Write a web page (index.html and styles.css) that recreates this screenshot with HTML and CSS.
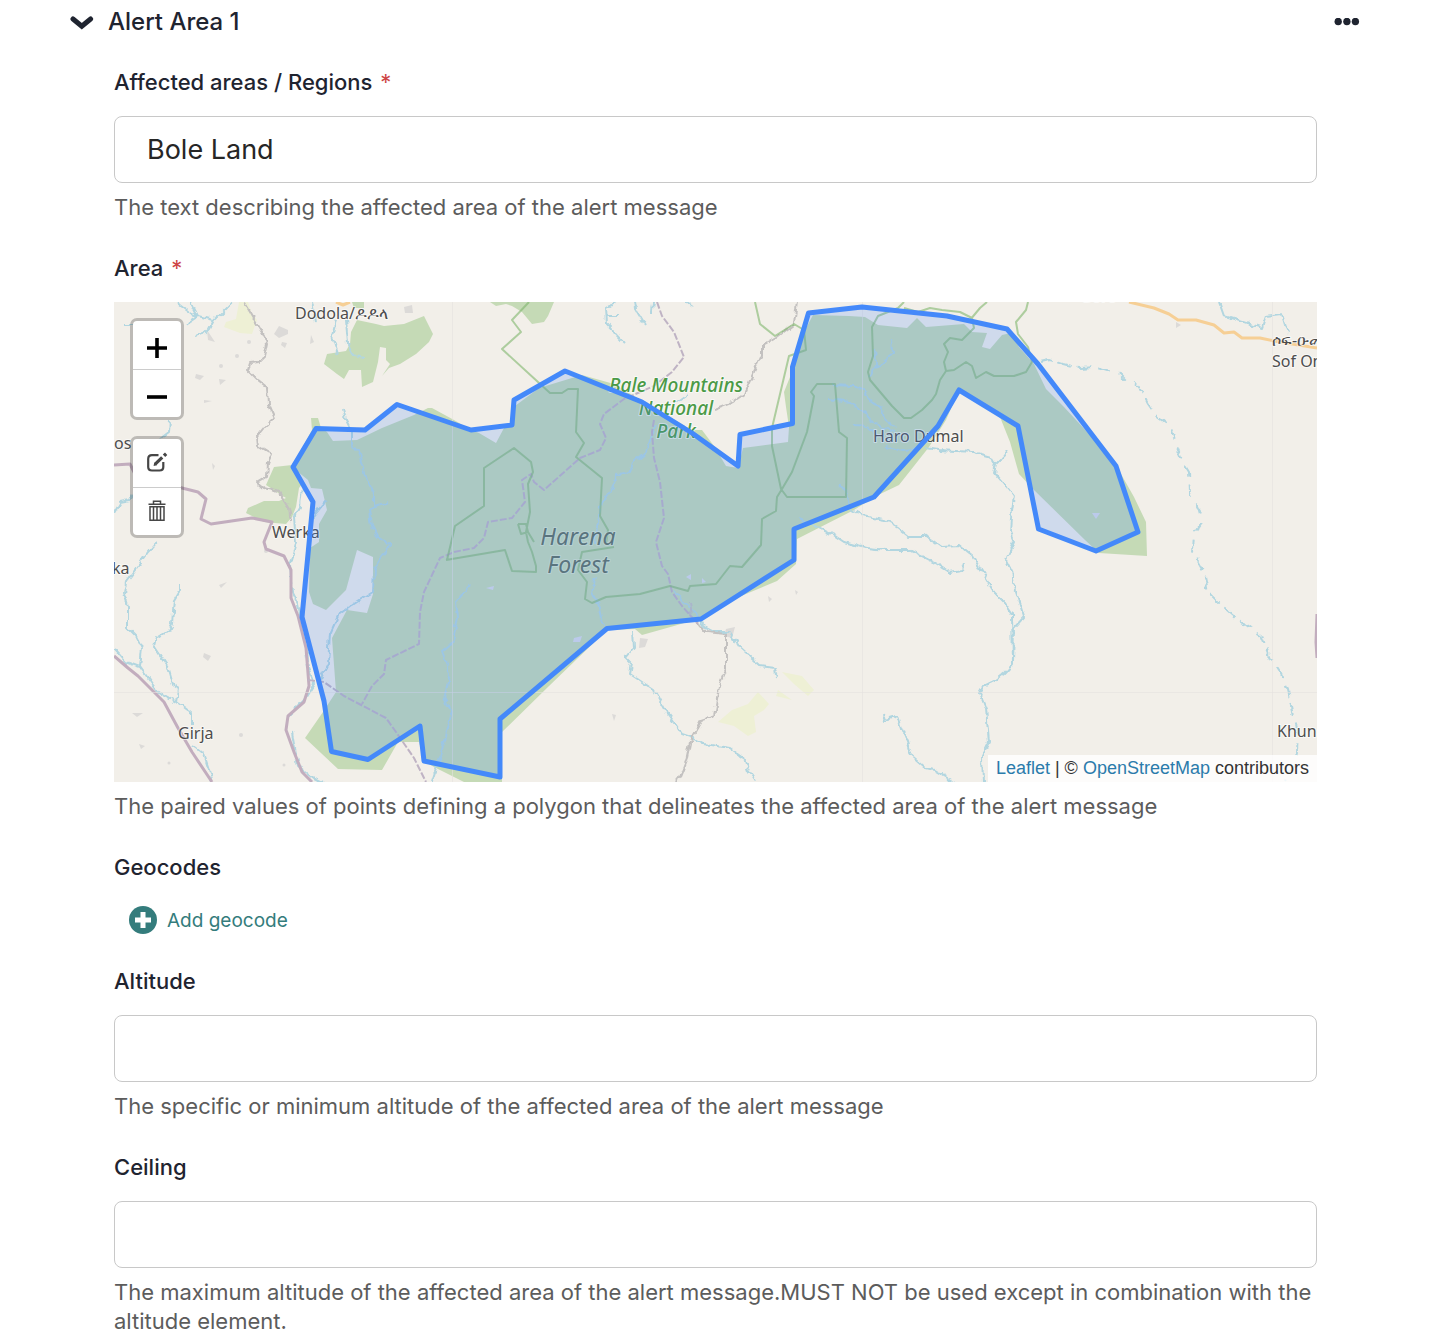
FILE: index.html
```html
<!DOCTYPE html>
<html lang="en">
<head>
<meta charset="utf-8">
<meta name="viewport" content="width=device-width, initial-scale=1">
<title>Alert Area</title>
<link rel="stylesheet" href="styles.css">
</head>
<body>
<main class="panel">
  <header class="panel-header">
    <button class="icon-button" type="button" aria-label="Collapse section" aria-expanded="true">
      <svg width="24" height="16" viewBox="0 0 24 16" fill="none" stroke="currentColor" stroke-width="5" stroke-linecap="round"><path d="M3 5 11.800 12.200 20.600 5"/></svg>
    </button>
    <h2 class="panel-title">Alert Area 1</h2>
    <button class="icon-button panel-menu" type="button" aria-label="More actions">
      <svg width="26" height="8" viewBox="0 0 26 8" fill="currentColor"><circle cx="4.200" cy="3.500" r="3.700"/><circle cx="12.900" cy="3.500" r="3.700"/><circle cx="21.400" cy="3.500" r="3.700"/></svg>
    </button>
  </header>

  <form class="fields">
    <div class="field">
      <label class="label" for="area-desc">Affected areas / Regions <span class="required">*</span></label>
      <input class="input" id="area-desc" type="text" value="Bole Land" required>
      <p class="help">The text describing the affected area of the alert message</p>
    </div>

    <div class="field">
      <h3 class="label">Area <span class="required">*</span></h3>
      <div class="map">
        <svg class="map-canvas" viewBox="0 0 1203 480" preserveAspectRatio="xMidYMid slice" role="img" aria-label="Map of the affected area">
          <defs>
            <filter id="meander" filterUnits="userSpaceOnUse" x="0" y="0" width="1203" height="480">
              <feTurbulence type="fractalNoise" baseFrequency="0.12" numOctaves="2" seed="4" result="noise"/>
              <feDisplacementMap in="SourceGraphic" in2="noise" scale="7" xChannelSelector="R" yChannelSelector="G"/>
            </filter>
          </defs>
          <g class="farmland">
            <path d="M125 0H134L138 12 143 18 138 32 126 31 110 25 112 20 122 17Z"/>
            <path d="M668 370 688 374 700 388 694 394 680 382ZM664 388 678 398 662 394ZM604 420 618 408 634 402 644 390 655 402 650 408 640 414 642 430 634 434 620 424Z"/>
          </g>
          <g class="builtup">
            <path d="M165 24 174 28 174 32 165 36 160 32ZM168 40 173 41 171 46 167 43ZM93 28 101 40 94 38ZM82 72 90 74 86 78 81 76ZM105 77 112 78 106 83ZM90 98 98 99 90 101ZM197 33 200 40 196 42ZM98 161 101 164 99 168ZM290 5 298 3 299 11 291 11ZM18 411 29 411 23 415ZM25 442 31 444 27 447ZM90 351 97 354 94 359 89 355ZM526 336 534 337 531 345 525 346ZM498 412 502 413 500 419ZM612 327 621 325 618 336 610 334ZM654 294 658 297 655 300ZM681 288 684 290 682 293ZM1062 20 1067 23 1062 26ZM105 283 113 280 107 286Z"/>
            <circle cx="152" cy="249" r="2"/><circle cx="127" cy="433" r="2"/><circle cx="170" cy="463" r="1.500"/><circle cx="55" cy="461" r="1.500"/><circle cx="135" cy="40" r="2"/><circle cx="123" cy="54" r="2"/><circle cx="107" cy="64" r="2"/>
          </g>
          <g class="forest">
            <path d="M197 116 204 116 207 126 213 130 219 139 243 138 268 126 300 113 314 106 318 106 340 118 357 128 365 131 382 141 390 126 398 122 401 104 425 86 458 76 468 73 500 82 530 100 578 128 588 128 600 144 612 164 624 166 626 158 629 146 674 140 675 125 672 105 670 90 676 75 681 60 690 30 699 13 735 14 751 15 764 23 793 26 803 16 812 25 850 22 858 30 873 31 868 45 876 47 888 33 897 31 905 45 920 62 932 87 950 105 975 132 1003 165 1020 195 1032 220 1033 254 985 251 971 238 920 188 905 172 896 140 886 115 845 88 832 118 815 145 785 183 762 194 740 208 683 237 682 262 663 279 620 297 587 316 560 324 528 333 521 327 493 328 435 384 388 430 388 480 350 480 320 465 310 459 305 440 284 440 268 468 224 467 191 436 209 410 222 390 218 336 233 308 253 311 259 292 259 255 243 248 232 288 212 308 199 302 195 290 196 246 205 240 205 222 213 208 208 187 197 186 194 178 178 165 198 128Z"/>
            <path d="M152 183 160 165 178 163 190 180 185 186 182 205 178 215 172 222 150 220 132 211 134 206 150 199 165 199 172 196Z"/>
            <path d="M213 52 232 49 236 42 237 30 243 18 262 22 270 24 290 22 310 14 319 32 315 40 302 52 286 62 275 66 268 74 276 62 272 58 272 46 266 45 264 60 259 80 248 85 247 68 235 68 230 77 223 72 210 62Z"/>
            <path d="M376 0H440L434 14 430 20 418 22 408 10 398 4 392 2 382 4ZM238 0H250V6H240Z"/>
          </g>
          <g class="meadow">
            <path d="M572 275 577 272 577 278ZM588 276 592 280 588 281ZM460 336 468 334 466 340 459 340ZM372 286 380 284 379 288ZM978 211 986 211 982 217Z"/>
          </g>
          <g class="river">
            <path d="M62 0 78 12 84 14 77 0M118 0 110 8 100 18 84 14 72 22M100 18 96 26 90 32 80 34M10 22H20M56 119 55 130 47 136M43 240 34 250 24 264 12 280 10 291 14 304 14 326 22 334 28 346 26 365M66 283 66 288 60 298 58 322 55 328 42 336 40 344 54 365 60 386 64 388 62 400M0 347 12 360 26 365 44 390 62 400 78 412 78 422M0 210 6 200 16 198 20 190M78 442 90 452 99 480M198 0 202 20M222 18 218 34 224 52M232 18 234 42 240 54 250 56M229 107 232 118 238 130 238 142 245 152 252 175 260 192 260 204 256 208 258 224 264 236 272 238 276 244 266 256 260 266 259 290 240 302 224 314 216 332 214 362 206 378M260 204 274 200M212 199 198 216M188 184 186 206 180 216 182 240 176 262 178 290 184 302 190 330 194 366 200 382 190 398 174 415M178 430 184 464 200 476 208 480M356 283 342 300 344 316 338 342 328 350 336 372 330 396 338 410 332 434 326 454 318 478M503 0 492 6 493 22 511 41M493 14 503 14M521 0 522 8 531 23M539 0 538 10M573 0 580 5M574 92 560 102M542 122 532 150 520 160 516 170 504 172 498 186 488 200 484 220 480 242M482 275 478 290 484 302 488 320 493 325M560 288 570 302 582 310 590 325 600 330 616 330 626 346 646 364 661 366 663 376M519 328 520 346 512 356 518 362 516 372 540 388 550 406 560 420 568 432 580 436 590 442 616 446 630 456 634 468 642 480M719 83 738 84 750 88 757 100 768 106 770 116 782 125M715 97 736 100 750 110 760 122 780 130M740 123 754 124 764 134M761 45 762 62 755 76M778 36 779 52 762 65M772 144 790 148 806 146M812 146 824 148 860 150 878 155 882 162 880 170 892 184 900 194 897 216M882 162 888 156 894 148M725 183 733 192 738 208 748 214 770 218 784 226 794 234 812 234 828 245 846 244 858 254 864 264 880 290 890 300 898 312 899 362 890 372 882 378 870 384 866 391 872 406 875 440 868 454 869 480M685 217 704 225 718 232 730 240 752 246 772 248 796 248 820 260 836 270 848 268 850 262M897 216 896 230 900 240 892 258 898 270 902 290 910 315 900 326 899 360M769 411 771 418 784 414 788 426 794 440 798 454 812 466 820 468 840 480M1105 0 1110 14 1130 20 1148 26 1152 14 1168 12 1174 32"/>
            <path class="intermittent" d="M926 59 935 57 950 62 966 66 980 65 996 70 1006 72 1013 79 1020 80 1028 90 1034 102 1042 113 1056 123 1062 142 1070 162 1075 170 1076 190 1084 206 1088 220 1080 232 1079 250 1090 270 1094 290 1106 302 1122 316 1148 334 1157 356 1167 372 1174 388 1178 405 1180 415 1184 430 1183 450 1180 462 1170 480"/>
          </g>
          <g class="track">
            <path d="M130 0 136 10 150 34 153 42 150 56 145 60 136 61 134 68 144 78 154 86 155 102 161 116 152 124 144 134 145 144 158 152 154 162 153 174 143 180 150 186 165 190 175 206 177 220M683 0 680 22 662 36 648 44 648 52 638 74 630 92 618 100 600 107M576 300 578 314 592 330 612 332 612 366 606 380 600 414 588 418 576 440 572 460 564 480"/>
          </g>
          <g class="border-line">
            <path d="M0 163 16 162 22 174 60 184 68 186 84 190 92 197 87 217 97 222 138 216 158 220 150 240 152 247 170 254 177 268 177 296 184 314 192 346 195 384 190 400 174 414 172 428 180 450 188 470 198 480M0 354 14 366 24 374 50 400 64 426 78 450 98 480M1203 312 1202 340 1203 356"/>
            <path class="dashed" d="M543 0 548 14 560 30 570 55 558 70 540 84 510 97 490 112 486 122 492 136 486 148 466 156 430 188 420 180 417 172 408 178 411 200 398 216 374 220 370 236 360 246 340 250 326 256 310 290 306 310 305 342 272 358 270 372 258 384 248 402M540 118 538 130 540 156 546 180 550 216 542 240 548 264 554 272 558 290 568 304 584 322M194 378 210 380 230 394 272 416 282 430 300 456 312 480"/>
          </g>
          <g class="park">
            <path d="M415 0 398 18 407 30 388 47 424 80 436 91 448 91 454 87 464 87 462 130 470 141 462 155 488 176 486 214 494 228 492 242M333 258 341 224 370 204 370 166 400 146 417 160 419 170 414 182 416 210 412 230 414 240 418 250 422 264 422 270 398 269 391 248 332 258M404 222 412 222 414 230 420 240M404 222 407 232 414 230M500 245 468 250 464 268 473 280 471 297 478 301 492 295 526 292 556 284 574 289 576 284 602 282 616 264 628 265 647 243 648 217 662 209 663 195 668 187 678 170 693 130 700 94 697 90 703 82H721L725 130 733 136 732 195 673 195 667 187 658 144 658 126 675 54 692 48 690 28 680 22 661 34 646 22 641 0M790 0 784 6 764 14 758 25 759 54 754 70 756 78 778 104 790 116H797L808 108 818 98 822 92 826 78 832 69 830 60 834 50 830 42 836 36 848 38 860 26 858 16 846 10 828 8 816 6 804 10 790 6M832 69 840 68 852 60 858 64 862 76 872 70 880 74 900 74 912 70 918 60 914 45 904 32 902 20 912 8 914 0M856 18 866 6 873 0"/>
          </g>
          <g class="road"><path d="M1015 0 1040 6 1055 12 1064 18 1082 18 1100 23 1110 31 1120 30 1128 36 1146 36 1160 39 1203 46M222 0 229 3 236 0"/></g>
          <path class="tile-seam" d="M338.500 0V480M748.500 0V480M1158.500 0V480M0 390.500H1203"/>
          <g class="place">
            <text x="181" y="17">Dodola/ዶዶላ</text>
            <text x="0" y="147">os</text>
            <text x="158" y="236">Werka</text>
            <text x="-2" y="272">ka</text>
            <text x="64" y="437">Girja</text>
            <text x="759" y="140">Haro Dumal</text>
            <text x="1158" y="44">ሶፍ-ዑመር</text>
            <text x="1158" y="65">Sof Omar</text>
            <text x="1163" y="435">Khunda</text>
            <text x="966" y="0">Goro</text>
          </g>
          <g class="park-name"><text x="562" y="90">Bale Mountains</text><text x="562" y="113">National</text><text x="562" y="136">Park</text></g>
          <g class="forest-name"><text x="464" y="243">Harena</text><text x="464" y="271">Forest</text></g>
          <path class="alert-area" d="M202 126.500 251 128 283 102.500 357 128 398 123 400 98 451 69 528 100 578 131 624 164 626 132.500 678.500 121.500V65L694.500 11 748 5 833 14 893 27 924 62 1002 164 1024 230 982 249 924.500 227 904 124 845 88 824 124 760 195 680 227V258L587 317 493 326.500 386 417V475L310 459 306 424 254 457.500 217.500 449.500 210 399 188 315 199 200 179 165Z"/>
        </svg>
        <div class="map-tools">
          <div class="tool-group">
            <button class="tool" type="button" aria-label="Zoom in"><svg width="24" height="24" viewBox="0 0 24 24" stroke="currentColor" stroke-width="3.600"><path d="M2 12H22M12 2V22"/></svg></button>
            <button class="tool" type="button" aria-label="Zoom out"><svg width="24" height="24" viewBox="0 0 24 24" stroke="currentColor" stroke-width="3.600"><path d="M2 12H22"/></svg></button>
          </div>
          <div class="tool-group">
            <button class="tool tool-muted" type="button" aria-label="Edit shape"><svg width="24" height="24" viewBox="0 0 24 24" fill="none" stroke="currentColor"><path stroke-width="2.200" d="M13.500 4.200H7Q3.200 4.200 3.200 8V16Q3.200 19.500 7 19.500H14.500Q18.300 19.500 18.300 16V11"/><path stroke-width="3.200" d="M10.200 13.200 17.200 6.400"/><path fill="currentColor" stroke="none" d="M8.600 14.900 9.200 11.600 12 14.200ZM17.800 3.600 20 1.600 22.300 3.900 20.200 5.900Z"/></svg></button>
            <button class="tool tool-muted" type="button" aria-label="Delete shape"><svg width="24" height="24" viewBox="0 0 24 24" fill="none" stroke="currentColor" stroke-width="1.500"><path d="M3.500 4.200H20.500M8.500 3.800V1.200H15.500V3.800M5 6.800H19V20.300H5ZM8.500 7.500V20M12 7.500V20M15.500 7.500V20"/></svg></button>
          </div>
        </div>
        <div class="attribution"><a href="#leaflet">Leaflet</a> | © <a href="#osm">OpenStreetMap</a> contributors</div>
      </div>
      <p class="help">The paired values of points defining a polygon that delineates the affected area of the alert message</p>
    </div>

    <div class="field">
      <h3 class="label">Geocodes</h3>
      <button class="add-button" type="button">
        <svg width="28" height="28" viewBox="0 0 28 28"><circle cx="14" cy="14" r="14" fill="currentColor"/><path d="M6 14H22M14 6V22" stroke="#fff" stroke-width="5"/></svg>
        Add geocode
      </button>
    </div>

    <div class="field">
      <label class="label" for="altitude">Altitude</label>
      <input class="input" id="altitude" type="text">
      <p class="help">The specific or minimum altitude of the affected area of the alert message</p>
    </div>

    <div class="field">
      <label class="label" for="ceiling">Ceiling</label>
      <input class="input" id="ceiling" type="text">
      <p class="help">The maximum altitude of the affected area of the alert message.MUST NOT be used except in combination with the altitude element.</p>
    </div>
  </form>
</main>
</body>
</html>
```
FILE: styles.css
```css
* { box-sizing: border-box; }

body {
  margin: 0;
  background: #fff;
  color: #1f2430;
  font-family: Inter, "Liberation Sans", sans-serif;
}

button { border: 0; padding: 0; background: none; color: inherit; font: inherit; cursor: pointer; }
svg { display: block; }

.panel { padding: 0 74px 0 70px; }

.panel-header { display: flex; align-items: center; gap: 14px; height: 43px; }
.panel-title { margin: 0; font-size: 24px; line-height: 30px; font-weight: 500; }
.panel-menu { margin-left: auto; }

.fields { display: flex; flex-direction: column; gap: 31px; padding: 24px 43px 0 44px; }
.field { display: flex; flex-direction: column; }

.label { margin: 0 0 19px; font-size: 22px; line-height: 30px; font-weight: 500; }
.required { margin-left: 2px; color: #cd4444; font-weight: 400; }

.input {
  width: 100%;
  height: 67px;
  padding: 0 32px;
  border: 1px solid #c8c8c8;
  border-radius: 8px;
  background: #fff;
  color: #262626;
  font-family: inherit;
  font-size: 27px;
}

.help { margin: 10px 0 0; color: #5c5c5c; font-size: 22px; line-height: 29px; }

.add-button {
  display: flex;
  align-items: center;
  align-self: flex-start;
  gap: 10px;
  height: 30px;
  margin: 4px 0 0 15px;
  color: #347c7c;
  font-size: 19px;
}

.map { position: relative; height: 480px; overflow: hidden; background: #f2efe9; }
.map-canvas { width: 100%; height: 100%; fill: none; stroke-linejoin: round; }

.farmland { fill: #eef0d5; }
.builtup { fill: #dcdad8; }
.forest { fill: #c5dab6; }
.meadow { fill: #d9dbe8; }
.river { stroke: #b2d6e0; stroke-width: 2; filter: url(#meander); }
.intermittent { stroke-dasharray: 12 8; }
.track { stroke: #c3c1c0; stroke-width: 2; filter: url(#meander); }
.border-line { stroke: #c2adbe; stroke-width: 3; }
.border-line .dashed { stroke: #bfb3c4; stroke-width: 2; stroke-dasharray: 7 2; }
.park { stroke: #7fb56c; stroke-opacity: 0.6; stroke-width: 2; }
.road { stroke: #f6cf95; stroke-width: 3; }
.tile-seam { stroke: #e4e1e0; stroke-width: 1; }
.forest ~ .tile-seam { stroke-opacity: 0.6; }

.map-canvas text { font-family: "Noto Sans", "DejaVu Sans", sans-serif; paint-order: stroke; stroke: rgba(255, 255, 255, 0.6); stroke-width: 2px; }
.place { fill: #4d4d4d; font-size: 16px; }
.park-name { fill: #4b9a46; font-size: 19px; font-style: italic; font-weight: 500; text-anchor: middle; }
.forest-name { fill: #5f7060; font-size: 23px; font-style: italic; text-anchor: middle; }
.map-canvas .forest-name text { stroke: rgba(255, 255, 255, 0.3); }

.alert-area { fill: #4489fa; fill-opacity: 0.2; stroke: #4489fa; stroke-width: 5; }

.map-tools { position: absolute; top: 16px; left: 16px; display: flex; flex-direction: column; gap: 16px; }
.tool-group { border: 3px solid rgba(0, 0, 0, 0.22); border-radius: 7px; background: #fff; background-clip: padding-box; }
.tool { display: flex; align-items: center; justify-content: center; width: 48px; height: 48px; padding-top: 6px; color: #000; }
.tool + .tool { border-top: 1px solid #ccc; }
.tool-muted { padding-top: 0; color: #464646; }

.attribution {
  position: absolute;
  right: 0;
  bottom: 0;
  padding: 0 8px;
  background: rgba(255, 255, 255, 0.8);
  color: #333;
  font: 18px/27px "Liberation Sans", sans-serif;
}
.attribution a { color: #2b7bab; text-decoration: none; }
```
